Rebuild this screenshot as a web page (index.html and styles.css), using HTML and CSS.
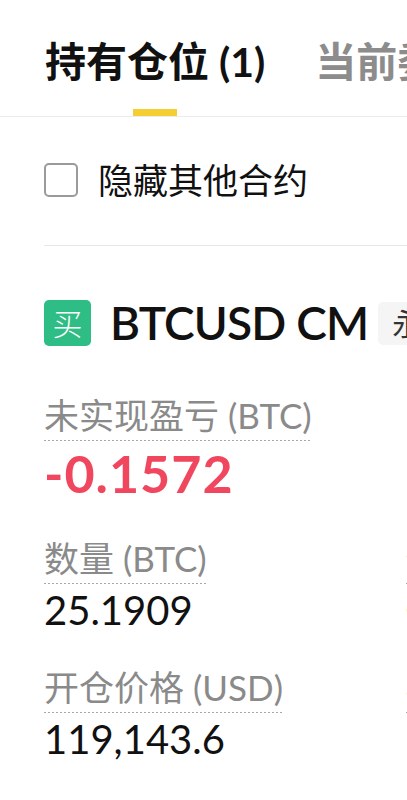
FILE: index.html
```html
<!DOCTYPE html>
<html lang="zh-CN">
<head>
<meta charset="utf-8">
<title>持有仓位</title>
<link rel="stylesheet" href="styles.css">
</head>
<body>
<div class="page">
  <nav class="tabs">
    <div class="tab tab-active">
      <span class="tab-label">持有仓位 (1)</span>
      <span class="tab-ink"></span>
    </div>
    <div class="tab">
      <span class="tab-label">当前委托 (0)</span>
    </div>
  </nav>

  <section class="content">
    <div class="filter-row">
      <span class="checkbox"></span>
      <span class="filter-label">隐藏其他合约</span>
    </div>

    <div class="position">
      <div class="symbol-row">
        <span class="side-badge">买</span>
        <span class="symbol">BTCUSD CM</span>
        <span class="tag">永续</span>
      </div>

      <div class="pnl">
        <span class="label">未实现盈亏 (BTC)</span>
        <div class="value value-loss">-0.1572</div>
      </div>

      <div class="grid">
        <div class="cell">
          <span class="label">数量 (BTC)</span>
          <div class="value">25.1909</div>
        </div>
        <div class="cell">
          <span class="label">保证金 (BTC)</span>
          <div class="value">0.2114</div>
        </div>
        <div class="cell">
          <span class="label">保证金比率</span>
          <div class="value">1.52%</div>
        </div>
        <div class="cell">
          <span class="label">开仓价格 (USD)</span>
          <div class="value">119,143.6</div>
        </div>
        <div class="cell">
          <span class="label">标记价格 (USD)</span>
          <div class="value">118,402.3</div>
        </div>
        <div class="cell">
          <span class="label">强平价格 (USD)</span>
          <div class="value">--</div>
        </div>
      </div>
    </div>
  </section>
</div>
</body>
</html>
```

FILE: styles.css
```css
html, body {
  margin: 0;
  padding: 0;
  background: #ffffff;
}

body {
  width: 407px;
  overflow: hidden;
  font-family: "Lato", "Noto Sans CJK SC", sans-serif;
  color: #111111;
}

.page {
  width: 1100px;
}

.tabs {
  display: flex;
  gap: 50px;
  padding-left: 45px;
  height: 116px;
  border-bottom: 1px solid #ececec;
  white-space: nowrap;
}

.tab {
  display: flex;
  flex-direction: column;
  align-items: center;
  padding-top: 40px;
}

.tab-label {
  font-size: 41px;
  line-height: 44px;
  font-weight: 700;
  color: #8c8c8c;
}

.tab-active .tab-label {
  color: #111111;
}

.tab-ink {
  display: block;
  width: 44px;
  height: 7px;
  margin-top: 25px;
  background: #f4cf34;
}

.content {
  padding-left: 44px;
}

.filter-row {
  display: flex;
  align-items: center;
  gap: 20px;
  padding: 43px 0 45px;
  border-bottom: 1px solid #e8e8e8;
}

.checkbox {
  width: 34px;
  height: 34px;
  box-sizing: border-box;
  border: 2px solid #9a9a9a;
  border-radius: 5px;
}

.filter-label {
  font-size: 35px;
  line-height: 40px;
  color: #111111;
}

.position {
  padding-top: 54px;
}

.symbol-row {
  display: flex;
  align-items: center;
  height: 46px;
  white-space: nowrap;
}

.side-badge {
  width: 47px;
  height: 46px;
  border-radius: 5px;
  background: #2ebd85;
  color: #ffffff;
  font-size: 30px;
  font-weight: 300;
  line-height: 46px;
  text-align: center;
}

.symbol {
  margin-left: 19px;
  font-size: 46px;
  font-weight: 600;
  letter-spacing: -0.8px;
  line-height: 46px;
}

.tag {
  margin-left: 10px;
  height: 43px;
  padding: 0 14px;
  border-radius: 5px;
  background: #f5f5f5;
  font-size: 30px;
  line-height: 43px;
  color: #333333;
}

.label {
  display: inline-block;
  font-size: 35px;
  line-height: 40px;
  padding-bottom: 6px;
  color: #8a8a8a;
  white-space: nowrap;
  background-image: linear-gradient(to right, #a8a8a8 50%, transparent 50%);
  background-size: 4px 1px;
  background-repeat: repeat-x;
  background-position: left bottom;
}

.pnl {
  margin-top: 49px;
}

.value {
  margin-top: 2px;
  font-size: 40px;
  line-height: 48px;
  color: #111111;
  white-space: nowrap;
}

.value-loss {
  margin-top: 4px;
  font-size: 52px;
  line-height: 56px;
  font-weight: 700;
  letter-spacing: 1px;
  color: #f0475f;
}

.grid {
  display: grid;
  grid-template-columns: 362px 362px 362px;
  row-gap: 33px;
  margin-top: 37px;
}
```
